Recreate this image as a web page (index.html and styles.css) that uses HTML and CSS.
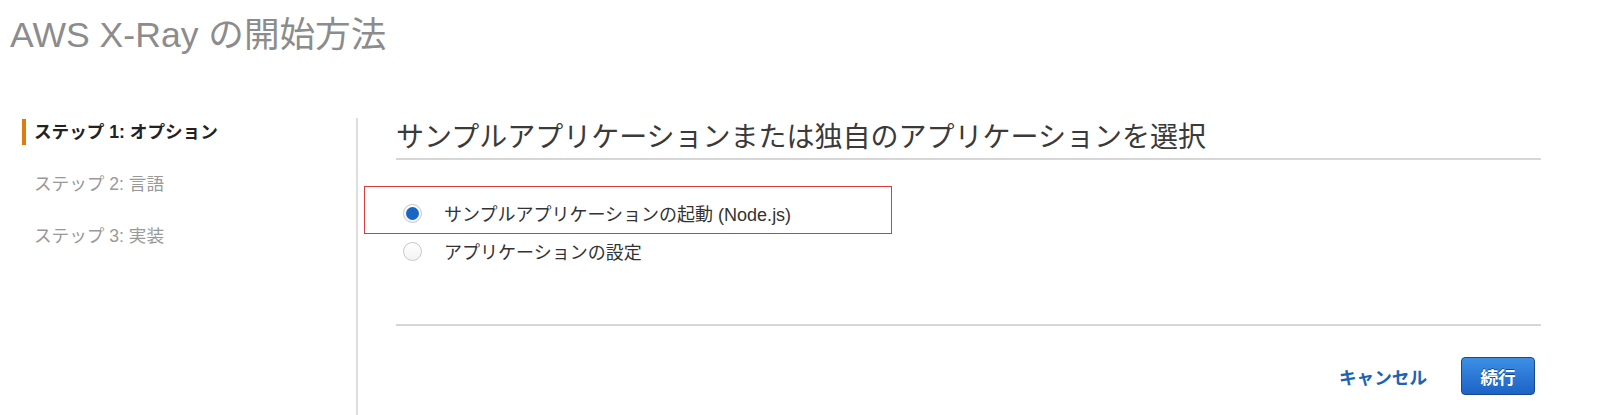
FILE: index.html
```html
<!DOCTYPE html>
<html lang="ja">
<head>
    <meta charset="UTF-8">
    <meta name="viewport" content="width=device-width, initial-scale=1.0">
    <title>AWS X-Ray の開始方法</title>
    <link rel="stylesheet" href="styles.css">
</head>
<body>
    <h1 class="page-title">AWS X-Ray の開始方法</h1>
    <div class="wizard">
        <ul class="steps">
            <li class="step active">ステップ 1: オプション</li>
            <li class="step">ステップ 2: 言語</li>
            <li class="step">ステップ 3: 実装</li>
        </ul>
        <div class="content">
            <h2 class="section-title">サンプルアプリケーションまたは独自のアプリケーションを選択</h2>
            <div class="options">
                <div class="highlight"></div>
                <label class="option">
                    <input type="radio" name="appType" value="sample" checked>
                    <span>サンプルアプリケーションの起動 (Node.js)</span>
                </label>
                <label class="option">
                    <input type="radio" name="appType" value="own">
                    <span>アプリケーションの設定</span>
                </label>
            </div>
            <div class="actions">
                <a class="cancel" href="#">キャンセル</a>
                <button class="primary">続行</button>
            </div>
        </div>
    </div>
</body>
</html>
```

FILE: styles.css
```css
body {
    margin: 0;
    font-family: "Liberation Sans", "Noto Sans CJK JP", sans-serif;
    color: #333;
    background: #fff;
}
.page-title {
    margin: 0;
    padding: 15px 0 0 10px;
    font-size: 35.6px;
    line-height: 40px;
    font-weight: normal;
    color: #8c8c8c;
}
.wizard {
    display: flex;
    margin-top: 63px;
    height: 297px;
}
.steps {
    list-style: none;
    margin: 0;
    padding: 1px 0 0;
    width: 358px;
    box-sizing: border-box;
    border-right: 2px solid #dedede;
}
.step {
    margin: 0 0 26px 22px;
    padding-left: 8px;
    border-left: 4px solid transparent;
    font-size: 17.6px;
    line-height: 26px;
    color: #999;
}
.step.active {
    border-left-color: #e07b12;
    color: #222;
    font-weight: bold;
}
.content {
    flex: 1;
    padding: 0 59px 0 38px;
}
.section-title {
    margin: 0;
    padding: 2px 0 2px;
    font-size: 28px;
    line-height: 36px;
    font-weight: normal;
    color: #3a3a3a;
    border-bottom: 2px solid #d6d6d6;
}
.options {
    position: relative;
    padding-top: 34px;
}
.highlight {
    position: absolute;
    top: 26px;
    left: -32px;
    width: 528px;
    height: 48px;
    box-sizing: border-box;
    border: 1px solid #dc3b3b;
}
.option {
    display: flex;
    align-items: center;
    height: 38px;
    padding-left: 7px;
    font-size: 18px;
    color: #333;
}
.option input {
    appearance: none;
    -webkit-appearance: none;
    margin: 0 22px 0 0;
    width: 19px;
    height: 19px;
    border: 1px solid #c8c8c8;
    border-radius: 50%;
    background: linear-gradient(#fff, #f3f3f3);
    box-sizing: border-box;
    position: relative;
}
.option input:checked::after {
    content: "";
    position: absolute;
    top: 2px;
    left: 2px;
    width: 13px;
    height: 13px;
    border-radius: 50%;
    background: #1766c4;
}
.actions {
    display: flex;
    justify-content: flex-end;
    align-items: center;
    gap: 34px;
    margin-top: 54px;
    padding: 31px 6px 0 0;
    border-top: 2px solid #d6d6d6;
}
.cancel {
    font-size: 17.6px;
    font-weight: bold;
    color: #1d63b3;
    text-decoration: none;
}
.primary {
    width: 74px;
    height: 38px;
    padding: 0;
    font-family: inherit;
    font-size: 17.6px;
    font-weight: bold;
    color: #fff;
    text-shadow: 0 -1px 0 rgba(0, 0, 0, 0.45);
    background: linear-gradient(#3d8fe4, #1c63c6);
    border: 1px solid #18498c;
    border-radius: 4px;
    cursor: pointer;
}
```
